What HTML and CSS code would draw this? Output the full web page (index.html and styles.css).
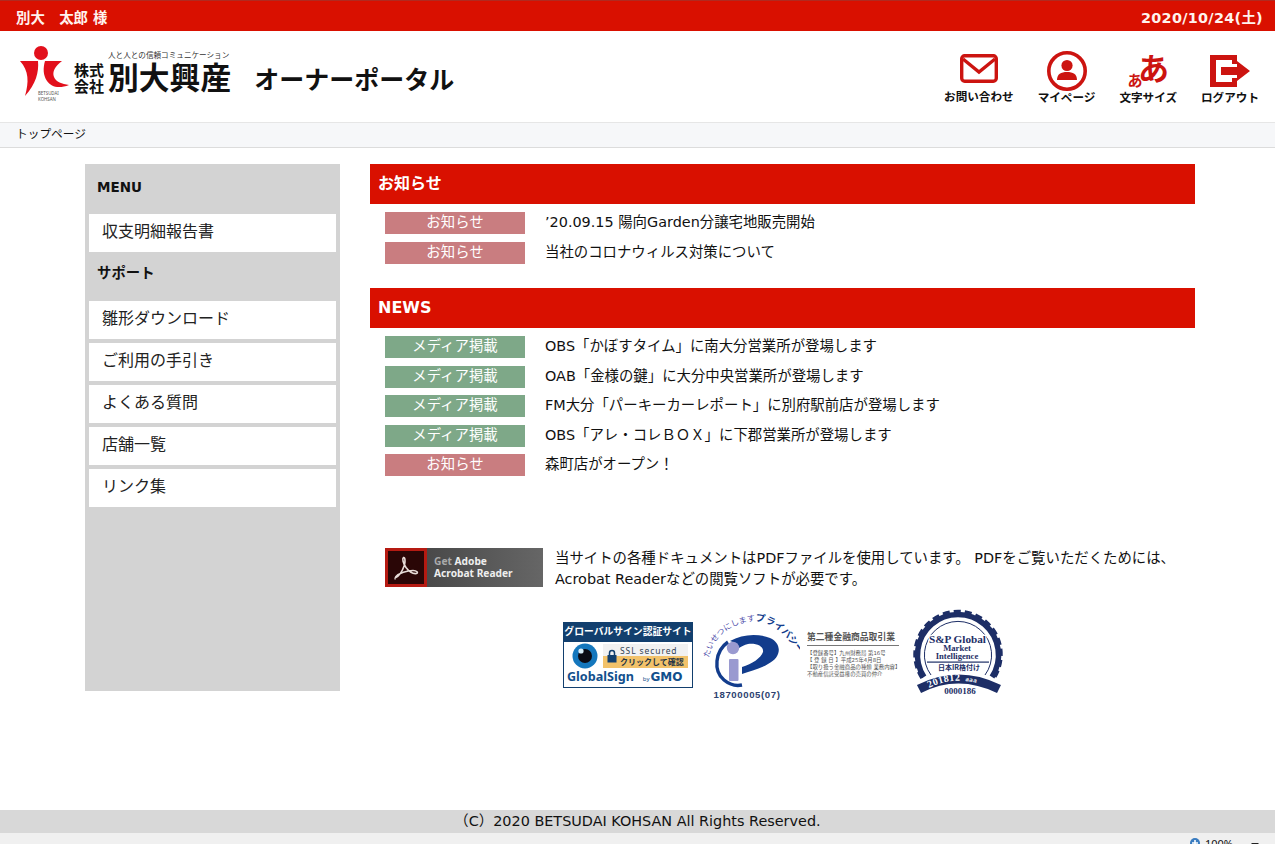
FILE: index.html
```html
<!DOCTYPE html>
<html lang="ja">
<head>
  <meta charset="utf-8">
  <title>オーナーポータル</title>
  <link rel="stylesheet" href="styles.css">
</head>
<body>
  <div class="topbar">
    <span class="user">別大　太郎 様</span>
    <span class="date">2020/10/24(土)</span>
  </div>

  <header class="header">
    <div class="brand">
      <svg class="logo-mark" width="58" height="68" viewBox="0 0 58 68">
        <circle cx="26" cy="13" r="7" fill="#e2101c"/>
        <path d="M5 21 H23 C24 32 21 44 10 56 C14 42 14 31 5 21Z" fill="#e2101c"/>
        <path d="M30 21 H47 C40 26 37 32 39 37 C41 42 47 44 54 45 C44 49 36 47 32 41 C28 35 28 28 30 21Z" fill="#e2101c"/>
        <text x="23" y="55" class="mark-text">BETSUDAI</text>
        <text x="23" y="61" class="mark-text">KOHSAN</text>
      </svg>
      <div class="company-type">株式<br>会社</div>
      <div class="company">
        <div class="slogan">人と人との信頼コミュニケーション</div>
        <div class="company-name">別大興産</div>
      </div>
      <div class="portal">オーナーポータル</div>
    </div>
    <nav class="tools">
      <a class="tool tool-mail">
        <svg width="38" height="29" viewBox="0 0 38 29">
          <rect x="1.7" y="1.7" width="34.6" height="25.6" rx="3" fill="none" stroke="#cc1410" stroke-width="3.4"/>
          <path d="M3 5 L19 18 L35 5" fill="none" stroke="#cc1410" stroke-width="3.4"/>
        </svg>
        <span>お問い合わせ</span>
      </a>
      <a class="tool tool-page">
        <svg width="40" height="40" viewBox="0 0 40 40">
          <circle cx="20" cy="20" r="18.2" fill="none" stroke="#cc1410" stroke-width="3.6"/>
          <circle cx="20" cy="14.5" r="5.6" fill="#cc1410"/>
          <path d="M10 29 C10 23 14 21 20 21 C26 21 30 23 30 29 Z" fill="#cc1410"/>
        </svg>
        <span>マイページ</span>
      </a>
      <a class="tool tool-size">
        <div class="size-glyphs"><span class="small-a">あ</span><span class="big-a">あ</span></div>
        <span>文字サイズ</span>
      </a>
      <a class="tool tool-logout">
        <svg width="40" height="32" viewBox="0 0 40 32">
          <path d="M0 0 H27 V9 H22 V5 H6 V27 H22 V23 H27 V32 H0 Z" fill="#cc1410"/>
          <path d="M11 12 H27 V6 L40 16 L27 26 V20 H11 Z" fill="#cc1410"/>
        </svg>
        <span>ログアウト</span>
      </a>
    </nav>
  </header>

  <div class="breadcrumb">トップページ</div>

  <main class="main">
    <aside class="side">
      <h3 class="side-title side-menu">MENU</h3>
      <a class="side-link">収支明細報告書</a>
      <h3 class="side-title side-support">サポート</h3>
      <a class="side-link">雛形ダウンロード</a>
      <a class="side-link">ご利用の手引き</a>
      <a class="side-link">よくある質問</a>
      <a class="side-link">店舗一覧</a>
      <a class="side-link">リンク集</a>
    </aside>

    <section class="content">
      <h2 class="heading">お知らせ</h2>
      <ul class="list list-notice">
        <li><span class="tag tag-info">お知らせ</span>’20.09.15 陽向Garden分譲宅地販売開始</li>
        <li><span class="tag tag-info">お知らせ</span>当社のコロナウィルス対策について</li>
      </ul>

      <h2 class="heading">NEWS</h2>
      <ul class="list list-news">
        <li><span class="tag tag-media">メディア掲載</span>OBS「かぼすタイム」に南大分営業所が登場します</li>
        <li><span class="tag tag-media">メディア掲載</span>OAB「金様の鍵」に大分中央営業所が登場します</li>
        <li><span class="tag tag-media">メディア掲載</span>FM大分「パーキーカーレポート」に別府駅前店が登場します</li>
        <li><span class="tag tag-media">メディア掲載</span>OBS「アレ・コレＢＯＸ」に下郡営業所が登場します</li>
        <li><span class="tag tag-info">お知らせ</span>森町店がオープン！</li>
      </ul>

      <div class="pdf">
        <div class="acrobat">
          <div class="acrobat-icon">
            <svg width="28" height="28" viewBox="0 0 28 28">
              <path d="M3 24 C6 23 10 18 12.5 11 C13.5 7 13 3 11.5 3.5 C10 4.5 11 9 14 13.5 C17 17.5 21 20 24.5 19.5 C26.5 19 25 16.5 21 16.5 C15 16.5 7 19 4 22.5 C3 24 3 25 3.5 25" fill="none" stroke="#e8dcd8" stroke-width="1.6"/>
            </svg>
          </div>
          <div class="acrobat-text"><span class="get">Get</span> Adobe<br>Acrobat Reader</div>
        </div>
        <p class="pdf-text">当サイトの各種ドキュメントはPDFファイルを使用しています。 PDFをご覧いただくためには、Acrobat Readerなどの閲覧ソフトが必要です。</p>
      </div>

      <div class="seals">
        <div class="gs">
          <div class="gs-head">グローバルサイン認証サイト</div>
          <div class="gs-body">
            <svg width="26" height="26" viewBox="0 0 26 26">
              <circle cx="13" cy="13" r="12.5" fill="#1477bd"/>
              <circle cx="13" cy="13" r="7" fill="#0b0b14"/>
              <circle cx="9" cy="8" r="2.6" fill="#d8ecf8"/>
            </svg>
            <div class="gs-ssl">
              <svg width="10" height="14" viewBox="0 0 10 14">
                <path d="M2.5 6 V4 a2.5 2.5 0 0 1 5 0 V6" fill="none" stroke="#123f6e" stroke-width="1.5"/>
                <rect x="0.5" y="6" width="9" height="7.5" fill="#123f6e"/>
              </svg>
              <div>
                <div class="gs-ssl-top">SSL secured</div>
                <div class="gs-ssl-bottom">クリックして確認</div>
              </div>
            </div>
          </div>
          <div class="gs-foot"><span class="gs-name">GlobalSign</span><span class="gs-by">by</span><span class="gs-gmo">GMO</span></div>
        </div>

        <svg class="pmark" width="100" height="98" viewBox="0 0 100 98">
          <path id="pmark-arc" d="M9 52 C13 30 32 17 54 15 C70 15 82 24 98 46" fill="none"/>
          <text class="pmark-arc-text"><textPath href="#pmark-arc">たいせつにします<tspan class="pmark-priv">プライバシー</tspan></textPath></text>
          <path d="M30 35 C42 28 58 27 70 32 C83 38 81 52 68 58 C60 63 50 65 42 68 L42 61 C52 58 61 52 63 46 C64 40 56 37 48 38 C44 39 42 40 39 42 C37 38 34 36 30 35Z" fill="#123c8c"/>
          <path d="M28 36 C15 45 13 65 24 74 C30 79 37 80 42 79" fill="none" stroke="#123c8c" stroke-width="3.4"/>
          <circle cx="33" cy="42" r="6.2" fill="#9a9ad0"/>
          <rect x="29" y="53" width="9.5" height="22" rx="1" fill="#9a9ad0"/>
          <text x="47" y="92" class="pmark-num">18700005(07)</text>
        </svg>

        <div class="fsa">
          <div class="fsa-title">第二種金融商品取引業</div>
          <div class="fsa-body">【登録番号】九州財務局 第16号<br>【 登 録 日 】平成25年4月8日<br>【取り扱う金融商品の種類 業務内容】<br>不動産信託受益権の売買の仲介</div>
        </div>

        <svg class="sp" width="105" height="98" viewBox="0 0 105 98">
          <path d="M19 71 A40.5 40.5 0 1 1 87 71" fill="none" stroke="#1d2e66" stroke-width="5.5"/>
          <path d="M17 72 A43 43 0 1 1 89 72" fill="none" stroke="#1d2e66" stroke-width="3.5" stroke-dasharray="7 4"/>
          <path d="M26 69 A33.6 33.6 0 1 1 80 69" fill="none" stroke="#1d2e66" stroke-width="1"/>
          <path d="M14 83 Q53 63 94 83" fill="none" stroke="#1d2e66" stroke-width="9"/>
          <path id="sp-arc-text" d="M24 82 Q53 67 90 83" fill="none"/>
          <text x="52.5" y="37" class="sp-big">S&amp;P Global</text>
          <text x="52" y="45" class="sp-mid">Market</text>
          <text x="52" y="53" class="sp-mid">Intelligence</text>
          <rect x="22" y="55.5" width="62" height="1.2" fill="#1d2e66"/>
          <text x="54" y="64" class="sp-small">日本IR格付け</text>
          <text class="sp-year"><textPath href="#sp-arc-text">201812<tspan dx="5" class="sp-aaa">aaa</tspan></textPath></text>
          <text x="55" y="88" class="sp-no">0000186</text>
        </svg>
      </div>
    </section>
  </main>

  <footer class="footer">（C）2020 BETSUDAI KOHSAN All Rights Reserved.</footer>
  <div class="statusbar">
    <svg width="10" height="10" viewBox="0 0 10 10">
      <circle cx="5" cy="5" r="5" fill="#3a7cc0"/>
      <path d="M5 2 V8 M2 5 H8" stroke="#fff" stroke-width="1.6"/>
    </svg>
    <span class="zoom">100%</span>
    <span class="caret"></span>
  </div>
</body>
</html>
```

FILE: styles.css
```css
* {
  box-sizing: border-box;
}

html, body {
  height: 100%;
}

body {
  margin: 0;
  height: 844px;
  overflow: hidden;
  display: flex;
  flex-direction: column;
  font-family: "DejaVu Sans", "Noto Sans CJK JP", sans-serif;
  font-size: 14.4px;
  color: #111;
  background: #fff;
}

/* top bar */
.topbar {
  height: 31px;
  flex: none;
  display: flex;
  justify-content: space-between;
  align-items: center;
  padding: 0 12px 0 16px;
  background: #d91000;
  border-top: 1px solid #b02a20;
  color: #fff3ee;
  font-weight: 700;
}

.date {
  letter-spacing: 0.3px;
}

/* header */
.header {
  height: 91px;
  flex: none;
  display: flex;
  justify-content: space-between;
  padding: 9px 16px 0 15px;
}

.brand {
  display: flex;
  align-items: flex-start;
}

.mark-text {
  font-family: "Noto Sans", sans-serif;
  font-size: 4.4px;
  fill: #555;
}

.company-type {
  margin: 23px 0 0 1px;
  font-size: 15px;
  line-height: 16px;
  font-weight: 700;
}

.company {
  margin-left: 4px;
}

.slogan {
  font-size: 7.6px;
  line-height: 11px;
  margin-top: 10px;
  color: #333;
  white-space: nowrap;
}

.company-name {
  margin-top: 1px;
  font-size: 30.8px;
  line-height: 32px;
  font-weight: 700;
  white-space: nowrap;
}

.portal {
  margin: 24px 0 0 23px;
  font-size: 25px;
  line-height: 34px;
  font-weight: 700;
  white-space: nowrap;
}

.tools {
  display: flex;
  align-items: flex-start;
  gap: 24px;
  margin-top: 5px;
}

.tool {
  height: 61px;
  display: flex;
  flex-direction: column;
  align-items: center;
  justify-content: flex-end;
  font-size: 11.6px;
  font-weight: 700;
  line-height: 16px;
  white-space: nowrap;
}

.tool-mail {
  padding-bottom: 1px;
}

.tool-mail svg {
  margin-bottom: 6px;
}

.tool-page svg {
  margin-bottom: -1px;
}

.tool-logout svg {
  margin-bottom: 3px;
}

.size-glyphs {
  position: relative;
  align-self: stretch;
  height: 40px;
  color: #cc1410;
  font-family: "Noto Sans CJK JP", sans-serif;
  font-weight: 700;
}

.small-a {
  position: absolute;
  left: 8px;
  top: 20px;
  font-size: 15px;
  line-height: 20px;
}

.big-a {
  position: absolute;
  right: 8px;
  top: -1px;
  font-size: 31px;
  line-height: 36px;
}

/* breadcrumb */
.breadcrumb {
  height: 26px;
  flex: none;
  padding: 2px 16px;
  background: #f6f7f9;
  border-top: 1px solid #e6e6e6;
  border-bottom: 1px solid #dcdcdc;
  font-size: 11.7px;
  line-height: 18px;
}

/* main */
.main {
  flex: 1;
  display: flex;
  align-items: flex-start;
  padding: 16px 80px 0 85px;
}

.side {
  width: 255px;
  height: 527px;
  flex: none;
  margin-right: 30px;
  padding: 0 4px;
  background: #d3d3d3;
}

.side-title {
  margin: 0;
  font-weight: 700;
  padding-left: 8px;
}

.side-menu {
  height: 50px;
  font-size: 13.5px;
  line-height: 46px;
}

.side-support {
  height: 45px;
  font-size: 14.4px;
  line-height: 34px;
}

.side-link {
  display: block;
  height: 38px;
  margin-bottom: 4px;
  padding-left: 13px;
  background: #fff;
  font-size: 16px;
  line-height: 35px;
  color: #222;
}

/* content */
.content {
  width: 825px;
  flex: none;
}

.heading {
  margin: 0;
  height: 40px;
  padding-left: 8px;
  background: #d91000;
  color: #fff;
  font-size: 16px;
  font-weight: 700;
  line-height: 39px;
}

.list {
  list-style: none;
  margin: 0;
  padding: 8px 0 0 15px;
}

.list li {
  display: flex;
  align-items: flex-start;
  height: 22px;
  margin-bottom: 8px;
  line-height: 20px;
  white-space: nowrap;
}

.list-notice {
  height: 84px;
}

.list-news {
  height: 220px;
}

.list-news li {
  margin-bottom: 7.5px;
}

.tag {
  width: 140px;
  height: 22px;
  margin-right: 20px;
  flex: none;
  text-align: center;
  color: #fff;
  line-height: 21px;
}

.tag-info {
  background: #c97d80;
}

.tag-media {
  background: #7ea888;
}

/* pdf */
.pdf {
  display: flex;
  padding-left: 15px;
}

.acrobat {
  width: 158px;
  height: 39px;
  flex: none;
  display: flex;
  align-items: center;
  background: linear-gradient(90deg, #3f3f3f, #666);
  margin-right: 12px;
}

.acrobat-icon {
  width: 42px;
  height: 39px;
  display: flex;
  align-items: center;
  justify-content: center;
  background: #2a0606;
  border: 3px solid #b51a12;
}

.acrobat-text {
  margin-left: 7px;
  padding-bottom: 2px;
  color: #eee;
  font-family: "Noto Sans", sans-serif;
  font-size: 10.2px;
  font-weight: 700;
  line-height: 12px;
  white-space: nowrap;
}

.get {
  color: #aaa;
}

.pdf-text {
  margin: 0;
  width: 625px;
  line-height: 21px;
}

/* seals */
.seals {
  display: flex;
  align-items: flex-start;
  margin-top: 16px;
  padding-left: 193px;
}

.gs {
  width: 130px;
  height: 66px;
  margin-top: 16px;
  flex: none;
  border: 1px solid #123f6e;
  background: #fff;
  font-family: "Noto Sans", "Noto Sans CJK JP", sans-serif;
}

.gs-head {
  height: 19px;
  background: #123f6e;
  color: #fff;
  font-size: 9.8px;
  font-weight: 700;
  line-height: 18px;
  text-align: center;
  white-space: nowrap;
}

.gs-body {
  display: flex;
  align-items: center;
  padding: 2px 4px 0 8px;
  height: 26px;
}

.gs-ssl {
  display: flex;
  align-items: center;
  margin-left: 5px;
  flex: 1;
  height: 24px;
  padding: 0 2px 0 4px;
  background: linear-gradient(180deg, #f1f1f1 50%, #f2c26a 50%);
}

.gs-ssl-top {
  font-size: 8.5px;
  line-height: 11px;
  letter-spacing: 0.9px;
  color: #345;
  margin-left: 3px;
  white-space: nowrap;
}

.gs-ssl-bottom {
  font-size: 8px;
  line-height: 11px;
  font-weight: 700;
  color: #234;
  margin-left: 3px;
  white-space: nowrap;
}

.gs-foot {
  height: 19px;
  padding: 0 4px 0 3px;
  display: flex;
  align-items: baseline;
  color: #124f8c;
}

.gs-name {
  font-size: 12.6px;
  line-height: 18px;
  font-weight: 700;
}

.gs-by {
  margin-left: 9px;
  font-size: 6px;
}

.gs-gmo {
  margin-left: 1px;
  font-family: "DejaVu Sans", sans-serif;
  font-size: 12px;
  font-weight: 700;
}

.pmark {
  margin-left: 7px;
  flex: none;
}

.pmark-arc-text {
  font-size: 8px;
  fill: #4a4aa8;
}

.pmark-priv {
  font-size: 9.6px;
  font-weight: 700;
  fill: #123c8c;
}

.pmark-num {
  font-family: "Liberation Sans", sans-serif;
  font-size: 9.6px;
  font-weight: 700;
  fill: #2d4270;
  text-anchor: middle;
  letter-spacing: 0.6px;
}

.fsa {
  width: 92px;
  margin: 25px 0 0 7px;
  flex: none;
  color: #555;
}

.fsa-title {
  font-size: 8.8px;
  font-weight: 700;
  line-height: 13px;
  padding-bottom: 1px;
  border-bottom: 1px solid #777;
  white-space: nowrap;
}

.fsa-body {
  margin-top: 4px;
  font-size: 5.4px;
  line-height: 7px;
  white-space: nowrap;
}

.sp {
  margin-left: 6px;
  flex: none;
}

.sp text {
  text-anchor: middle;
  font-family: "Liberation Serif", serif;
  font-weight: 700;
  fill: #1d2e66;
}

.sp .sp-big {
  font-size: 11.2px;
  stroke: #fff;
  stroke-width: 2.5px;
  paint-order: stroke;
}

.sp-mid {
  font-size: 8.6px;
}

.sp .sp-small {
  font-size: 7px;
  font-family: "Noto Sans CJK JP", sans-serif;
}

.sp .sp-year {
  font-size: 10px;
  text-anchor: start;
  fill: #fff;
  letter-spacing: 0.4px;
}

.sp-aaa {
  font-size: 7px;
}

.sp .sp-no {
  font-size: 9px;
}

/* footer */
.footer {
  height: 23px;
  flex: none;
  background: #d8d8d8;
  text-align: center;
  line-height: 22px;
}

.statusbar {
  height: 11px;
  flex: none;
  display: flex;
  justify-content: flex-end;
  align-items: flex-start;
  padding: 5px 16px 0 0;
  overflow: hidden;
  background: #f0f0f0;
  font-family: "Noto Sans", sans-serif;
  font-size: 11px;
  line-height: 12px;
}

.zoom {
  margin-left: 5px;
}

.caret {
  margin: 5px 0 0 18px;
  border: 4px solid transparent;
  border-top-color: #222;
}
```
